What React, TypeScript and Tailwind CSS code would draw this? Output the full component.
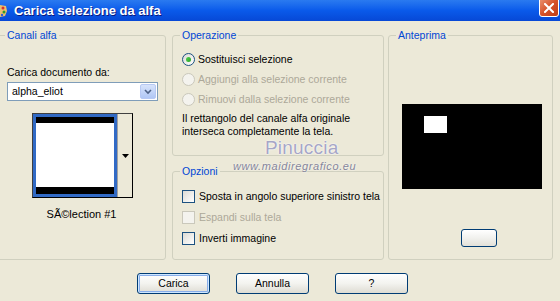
import React from "react";

const font = "font-['Liberation_Sans',Arial,sans-serif]";

function Radio({ checked, disabled, label }: { checked?: boolean; disabled?: boolean; label: string }) {
  return (
    <div className="flex h-[20px] items-center gap-[3px]">
      <div
        className={
          "flex h-[13px] w-[13px] items-center justify-center rounded-full border " +
          (disabled
            ? "border-[#CAC8BB] bg-[#F4F3EE]"
            : "border-[#1C5180] bg-gradient-to-br from-[#DCDBD5] to-[#FFFFFF]")
        }
      >
        {checked && (
          <div className="h-[5px] w-[5px] rounded-full bg-gradient-to-br from-[#55D451] to-[#21A121]" />
        )}
      </div>
      <span className={disabled ? "text-[#ACA899]" : "text-black"}>{label}</span>
    </div>
  );
}

function Check({ disabled, label }: { disabled?: boolean; label: string }) {
  return (
    <div className="flex h-[21px] items-center gap-[4px]">
      <div
        className={
          "h-[13px] w-[13px] border " +
          (disabled
            ? "border-[#CAC8BB] bg-[#F4F3EE]"
            : "border-[#1C5180] bg-gradient-to-br from-[#DCDBD5] to-[#FFFFFF]")
        }
      />
      <span className={disabled ? "text-[#ACA899]" : "text-black"}>{label}</span>
    </div>
  );
}

function Legend({ children }: { children: React.ReactNode }) {
  return (
    <legend className="ml-[7px] px-[2px] leading-[14px] text-[#0046D5]">{children}</legend>
  );
}

function XPButton({ label, focused }: { label: string; focused?: boolean }) {
  return (
    <div
      className={
        "flex h-[21px] w-[73px] items-center justify-center rounded-[3px] border border-[#003C74] bg-gradient-to-b from-[#FFFFFF] via-[#F3F3EF] to-[#DEDCD3] text-black " +
        (focused ? "shadow-[inset_0_0_0_1px_#CEE7FF,inset_0_0_0_2px_#89AEEA]" : "")
      }
    >
      {label}
    </div>
  );
}

export default function App() {
  return (
    <div className={`relative h-[301px] w-[560px] overflow-hidden bg-[#ECE9D8] text-[10.5px] leading-[13px] ${font}`}>
      {/* Title bar */}
      <div className="flex h-[21px] items-start bg-gradient-to-b from-[#2A7AF0] via-[#0A5AEA] to-[#0748D6]">
        <svg width="8" height="18" viewBox="0 0 8 18" className="mt-[2px]">
          <path d="M0 3 L6 4 L7 9 L5 14 L0 15 Z" fill="#E8C070" />
          <circle cx="3" cy="6" r="1.5" fill="#D83030" />
          <circle cx="4" cy="10" r="1.5" fill="#2E9A2E" />
          <circle cx="2" cy="13" r="1.2" fill="#2D5BD8" />
        </svg>
        <span className="ml-[6px] mt-[3px] text-[13px] font-bold leading-[15px] text-white [text-shadow:1px_1px_#0A1A80]">
          Carica selezione da alfa
        </span>
        <div className="ml-auto mr-[1px] -mt-[3px] flex h-[20px] w-[20px] items-center justify-center rounded-[3px] border border-white bg-gradient-to-br from-[#EA9372] via-[#D6532B] to-[#C03C14]">
          <svg width="10" height="10" viewBox="0 0 10 10" className="mt-[2px]">
            <path d="M1 1 L9 9 M9 1 L1 9" stroke="white" strokeWidth="2" strokeLinecap="square" />
          </svg>
        </div>
      </div>

      {/* Body */}
      <div className="flex gap-[6px] pt-[7px]">
        {/* Canali alfa */}
        <fieldset className="-ml-[3px] h-[232px] w-[169px] rounded-[3px] border border-[#D0D0BF]">
          <Legend>Canali alfa</Legend>
          <div className="pl-[9px]">
            <div className="mt-[24px] text-black">Carica documento da:</div>
            <div className="mt-[3px] flex h-[19px] w-[151px] items-center border border-[#7F9DB9] bg-white">
              <span className="ml-[4px] flex-1 text-black">alpha_eliot</span>
              <div className="mr-[1px] flex h-[15px] w-[16px] items-center justify-center rounded-[2px] border border-[#B7C9F4] bg-gradient-to-b from-[#D7E3FB] to-[#B0C7F5]">
                <svg width="8" height="6" viewBox="0 0 8 6">
                  <path d="M1 1 L4 4 L7 1" stroke="#4D6185" strokeWidth="1.6" fill="none" />
                </svg>
              </div>
            </div>
            <div className="ml-[25px] mt-[12px] flex h-[85px] w-[101px] border-l border-t border-l-[#404040] border-t-[#404040] border-r border-b border-r-black border-b-black">
              <div className="flex h-[83px] w-[84px] flex-col border-[3px] border-[#316AC5] bg-white">
                <div className="h-[6px] bg-black" />
                <div className="flex-1" />
                <div className="h-[7px] bg-black" />
              </div>
              <div className="flex flex-1 items-center justify-center border-l border-l-[#A0A0A0]">
                <svg width="7" height="4" viewBox="0 0 7 4">
                  <path d="M0 0 H7 L3.5 4 Z" fill="black" />
                </svg>
              </div>
            </div>
          </div>
          <div className="mt-[10px] text-center text-[11px] text-black">SÃ©lection #1</div>
        </fieldset>

        {/* Middle column */}
        <div className="flex flex-col gap-[8px]">
          <fieldset className="h-[128px] w-[212px] rounded-[3px] border border-[#D0D0BF]">
            <Legend>Operazione</Legend>
            <div className="pl-[9px]">
              <div className="mt-[7px]">
                <Radio checked label="Sostituisci selezione" />
                <Radio disabled label="Aggiungi alla selezione corrente" />
                <Radio disabled label="Rimuovi dalla selezione corrente" />
              </div>
              <div className="mt-[3px] text-black">
                Il rettangolo del canale alfa originale
                <br />
                interseca completamente la tela.
              </div>
            </div>
          </fieldset>
          <fieldset className="h-[96px] w-[212px] rounded-[3px] border border-[#D0D0BF]">
            <Legend>Opzioni</Legend>
            <div className="mt-[8px] pl-[9px]">
              <Check label="Sposta in angolo superiore sinistro tela" />
              <Check disabled label="Espandi sulla tela" />
              <Check label="Inverti immagine" />
            </div>
          </fieldset>
        </div>

        {/* Anteprima */}
        <fieldset className="ml-[-2px] h-[232px] w-[165px] rounded-[3px] border border-[#D0D0BF]">
          <Legend>Anteprima</Legend>
          <div className="ml-[13px] mt-[62px] h-[85px] w-[140px] bg-black pl-[22px] pt-[12px]">
            <div className="h-[17px] w-[23px] bg-white" />
          </div>
          <div className="ml-[72px] mt-[40px] h-[18px] w-[36px] rounded-[3px] border border-[#003C74] bg-gradient-to-b from-[#FFFFFF] via-[#F1F1EE] to-[#E3E1D8]" />
        </fieldset>
      </div>

      {/* Buttons */}
      <div className="mt-[13px] flex gap-[26px] pl-[137px]">
        <XPButton label="Carica" focused />
        <XPButton label="Annulla" />
        <XPButton label="?" />
      </div>

      {/* Watermark */}
      <div className="pointer-events-none absolute left-[265px] top-[137px] text-[19px] leading-[22px] tracking-[0.2px] text-[#A6A6C6] [text-shadow:0_0_2px_#ffffff,0_0_1px_#ffffff]">
        Pinuccia
      </div>
      <div className="pointer-events-none absolute left-[233px] top-[160px] text-[11px] italic leading-[13px] tracking-[0.6px] text-[#85859A] [text-shadow:0_0_2px_#ffffff]">
        www.maidiregrafico.eu
      </div>
    </div>
  );
}
